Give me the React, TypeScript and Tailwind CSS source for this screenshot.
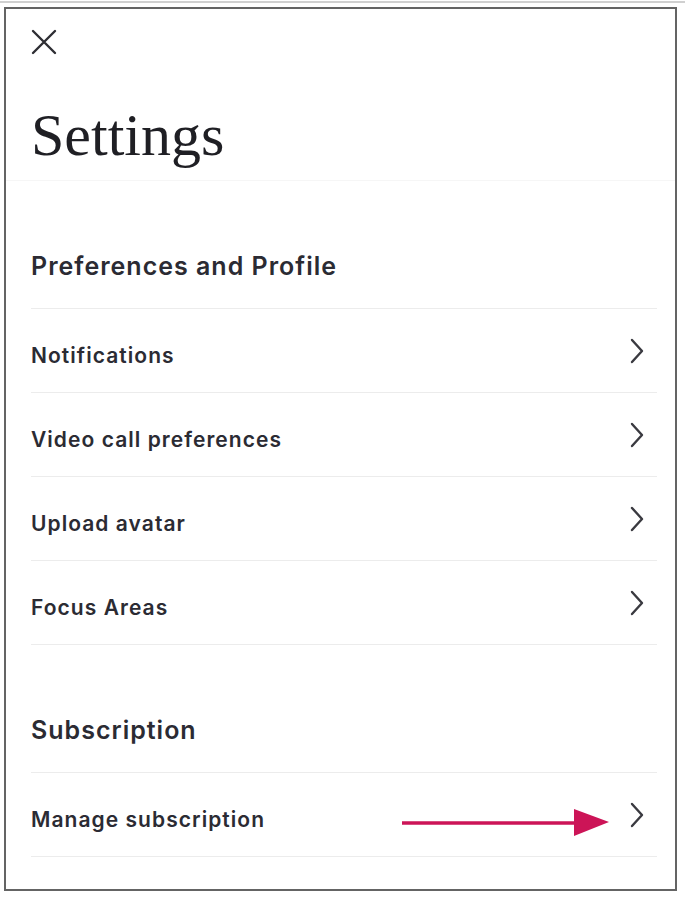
const sans = { fontFamily: 'Inter, "Noto Sans", sans-serif' }

const prefs = ['Notifications', 'Video call preferences', 'Upload avatar', 'Focus Areas']

function Chevron() {
  return (
    <svg className="mr-[13px]" width="14" height="26" viewBox="0 0 14 26" fill="none" stroke="#3a3a40" strokeWidth="2.4" strokeLinecap="round" strokeLinejoin="round">
      <path d="M2 2 L12 13 L2 24" />
    </svg>
  )
}

function Row({ label, children }: { label: string; children?: React.ReactNode }) {
  return (
    <div className="relative flex h-[84px] items-center justify-between border-b border-[#ececec]">
      <span className="pt-[10px] text-[21px] font-semibold leading-[28px] tracking-[0.05em] text-[#2b2b33]">{label}</span>
      <Chevron />
      {children}
    </div>
  )
}

function SectionTitle({ title }: { title: string }) {
  return (
    <div className="flex h-[128px] items-end border-b border-[#ececec] pb-[26px]">
      <h2 className="text-[25px] font-semibold leading-[32px] tracking-[0.04em] text-[#2b2b33]">{title}</h2>
    </div>
  )
}

export default function App() {
  return (
    <div className="h-[898px] w-[685px] bg-white" style={sans}>
      <div className="mt-px h-[2px] w-full bg-[#d0d0d0]" />
      <div className="ml-[4px] mt-[4px] h-[884px] w-[673px] border-2 border-[#646464] bg-white">
        {/* Header */}
        <div className="flex h-[172px] flex-col border-b border-[#f6f6f6] pl-[25px] pt-[20px]">
          <svg width="26" height="26" viewBox="0 0 26 26" fill="none" stroke="#2e2e33" strokeWidth="2.4" strokeLinecap="round">
            <path d="M2 2 L24 24 M24 2 L2 24" />
          </svg>
          <h1
            className="mt-[50px] text-[60px] leading-[60px] text-[#1f1f24]"
            style={{ fontFamily: '"Liberation Serif", "DejaVu Serif", serif' }}
          >
            Settings
          </h1>
        </div>

        <div className="pl-[25px] pr-[18px]">
          <SectionTitle title="Preferences and Profile" />
          {prefs.map((p) => (
            <Row key={p} label={p} />
          ))}

          <SectionTitle title="Subscription" />
          <Row label="Manage subscription">
            {/* annotation arrow */}
            <svg className="absolute left-[371px] top-[35px]" width="208" height="30" viewBox="0 0 208 30">
              <path d="M0 15 H176" stroke="#cc1457" strokeWidth="3.5" />
              <path d="M172 1 L207 14 L172 28 Z" fill="#cc1457" />
            </svg>
          </Row>
        </div>
      </div>
    </div>
  )
}
